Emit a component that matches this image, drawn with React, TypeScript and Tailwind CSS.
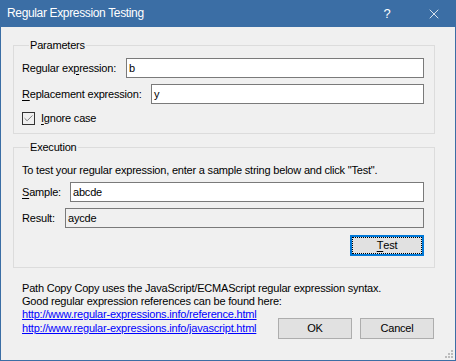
import { Check, X } from "lucide-react";

const font = { fontFamily: '"Liberation Sans", Arial, sans-serif' };

const Mn = ({ children }: { children: string }) => <span className="underline underline-offset-2">{children}</span>;

const TextBox = ({ value, readOnly = false }: { value: string; readOnly?: boolean }) => (
  <div
    className={`flex h-[20px] flex-1 items-center border border-[#7a7a7a] px-[2px] text-black ${
      readOnly ? "bg-[#f0f0f0]" : "bg-white"
    }`}
  >
    {value}
  </div>
);

const DialogButton = ({ label, focused = false }: { label: React.ReactNode; focused?: boolean }) => (
  <button
    className={`flex h-[21px] w-[74px] items-center justify-center bg-[#e1e1e1] text-black ${
      focused ? "border-2 border-[#0078d7]" : "border border-[#adadad]"
    }`}
  >
    {focused ? (
      <span className="flex h-full w-full items-center justify-center border border-dotted border-black">{label}</span>
    ) : (
      label
    )}
  </button>
);

export default function App() {
  return (
    <div
      className="flex h-[361px] w-[456px] flex-col border-x border-b border-[#3b6ea5] bg-[#f0f0f0] text-[11px] leading-[13px] tracking-[-0.2px] text-black"
      style={font}
    >
      <div className="-mx-px flex h-[27px] shrink-0 items-center bg-[#3b6ea5] pl-[7px] text-white">
        <span className="flex-1 text-[12px] tracking-[-0.35px]">Regular Expression Testing</span>
        <span className="w-[14px] text-center text-[13px]">?</span>
        <span className="ml-[31px] mr-[13px] flex w-[18px] justify-center">
          <X size={16} strokeWidth={1.2} />
        </span>
      </div>

      <fieldset className="ml-[12px] mt-[12px] w-[422px] border border-[#dcdcdc] pb-[8px] pl-[8px] pr-[10px]">
        <legend className="ml-[7px] px-[1px]">Parameters</legend>
        <div className="mt-[6px] flex items-center">
          <span className="w-[104px]">
            Regular ex<Mn>p</Mn>ression:
          </span>
          <TextBox value="b" />
        </div>
        <div className="mt-[6px] flex items-center">
          <span className="w-[129px]">
            <Mn>R</Mn>eplacement expression:
          </span>
          <TextBox value="y" />
        </div>
        <div className="mt-[8px] flex items-center">
          <span className="flex h-[13px] w-[13px] items-center justify-center border border-[#333333] bg-[#f0f0f0] text-[#555555]">
            <Check size={11} strokeWidth={1.6} />
          </span>
          <span className="ml-[6px]">
            <Mn>I</Mn>gnore case
          </span>
        </div>
      </fieldset>

      <fieldset className="ml-[12px] mt-[7px] w-[422px] border border-[#dcdcdc] pb-[11px] pl-[8px] pr-[10px]">
        <legend className="ml-[7px] px-[1px]">Execution</legend>
        <div className="mt-[10px]">To test your regular expression, enter a sample string below and click "Test".</div>
        <div className="mt-[5px] flex items-center">
          <span className="w-[48px]">
            <Mn>S</Mn>ample:
          </span>
          <TextBox value="abcde" />
        </div>
        <div className="mt-[6px] flex items-center">
          <span className="w-[43px]">Result:</span>
          <TextBox value="aycde" readOnly />
        </div>
        <div className="mt-[7px] flex justify-end">
          <DialogButton
            focused
            label={
              <>
                <Mn>T</Mn>est
              </>
            }
          />
        </div>
      </fieldset>

      <div className="relative flex-1 pl-[21px] pr-[21px] pt-[14px]">
        <div>Path Copy Copy uses the JavaScript/ECMAScript regular expression syntax.</div>
        <div>Good regular expression references can be found here:</div>
        <div className="flex items-end">
          <div className="flex flex-1 flex-col">
            <a className="text-[#0000ff] underline" href="#">
              http://www.regular-expressions.info/reference.html
            </a>
            <a className="mt-px text-[#0000ff] underline" href="#">
              http://www.regular-expressions.info/javascript.html
            </a>
          </div>
          <div className="mb-[-4px] flex gap-[8px]">
            <DialogButton label="OK" />
            <DialogButton label="Cancel" />
          </div>
        </div>
        <svg className="absolute bottom-[1px] right-[1px]" width="10" height="10" viewBox="0 0 10 10">
          {[
            [7, 1],
            [4, 4],
            [7, 4],
            [1, 7],
            [4, 7],
            [7, 7],
          ].map(([x, y]) => (
            <rect key={`${x}-${y}`} x={x} y={y} width="2" height="2" fill="#bcbcbc" />
          ))}
        </svg>
      </div>
    </div>
  );
}
